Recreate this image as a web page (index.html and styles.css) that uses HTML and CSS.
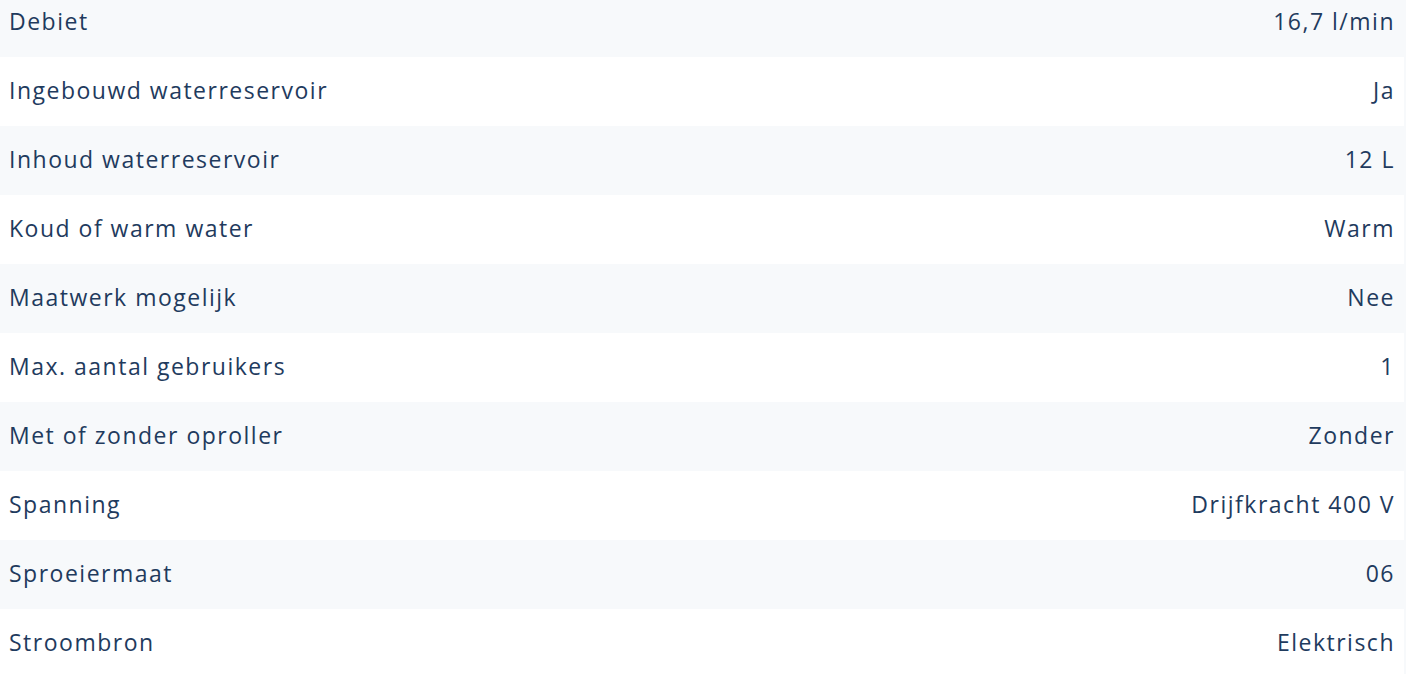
FILE: index.html
```html
<!DOCTYPE html>
<html lang="nl">
<head>
  <meta charset="UTF-8">
  <title>Specificaties</title>
  <link rel="stylesheet" href="styles.css">
</head>
<body>

<ul class="specs">
  <li><span>Debiet</span><span>16,7 l/min</span></li>
  <li><span>Ingebouwd waterreservoir</span><span>Ja</span></li>
  <li><span>Inhoud waterreservoir</span><span>12 L</span></li>
  <li><span>Koud of warm water</span><span>Warm</span></li>
  <li><span>Maatwerk mogelijk</span><span>Nee</span></li>
  <li><span>Max. aantal gebruikers</span><span>1</span></li>
  <li><span>Met of zonder oproller</span><span>Zonder</span></li>
  <li><span>Spanning</span><span>Drijfkracht 400 V</span></li>
  <li><span>Sproeiermaat</span><span>06</span></li>
  <li><span>Stroombron</span><span>Elektrisch</span></li>
</ul>

</body>
</html>
```

FILE: styles.css
```css
* {
  margin: 0;
  padding: 0;
  list-style: none;
}

body {
  background-color: #f7f9fb;
  font-family: "Open Sans", "Liberation Sans", sans-serif;
  color: #1f3b5e;
}

/*列表整体往上收一点，第一行被截掉一部分*/
.specs {
  width: calc(100% - 2px);
  margin-top: -12px;
}

.specs li {
  display: flex;
  justify-content: space-between;
  align-items: center;
  height: 69px;
  padding: 0 9px 4px 9px;
  box-sizing: border-box;
  font-size: 23px;
  letter-spacing: 1.5px;
  background-color: #fff;
}

.specs li:nth-child(odd) {
  background-color: #f7f9fb;
}
```
